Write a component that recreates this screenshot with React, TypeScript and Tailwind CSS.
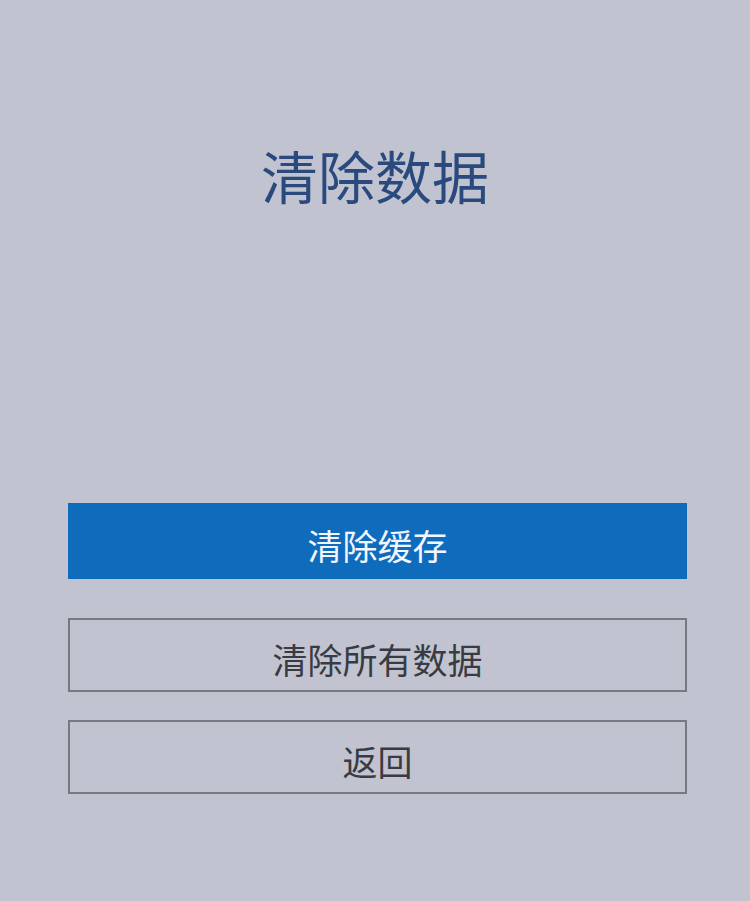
export default function App() {
  return (
    <div
      className="min-h-[901px] w-full bg-[#c1c4d0] flex flex-col"
      style={{ fontFamily: '"Noto Sans CJK SC", "Noto Sans", sans-serif' }}
    >
      <h1 className="mt-[146px] text-center text-[57px] leading-none font-normal text-[#2a4a7e]">
        清除数据
      </h1>

      <div className="mt-[300px] px-[68px] mr-[-5px] flex flex-col">
        <button
          type="button"
          className="h-[76px] w-full bg-[#0f6cbd] pt-[7px] text-[#f2f6ff] text-[35px] leading-none"
        >
          清除缓存
        </button>
        <button
          type="button"
          className="mt-[39px] h-[74px] w-full border-2 border-[#777982] pt-[7px] text-[#3a3b42] text-[35px] leading-none"
        >
          清除所有数据
        </button>
        <button
          type="button"
          className="mt-[28px] h-[74px] w-full border-2 border-[#777982] pt-[7px] text-[#3a3b42] text-[35px] leading-none"
        >
          返回
        </button>
      </div>
    </div>
  );
}
